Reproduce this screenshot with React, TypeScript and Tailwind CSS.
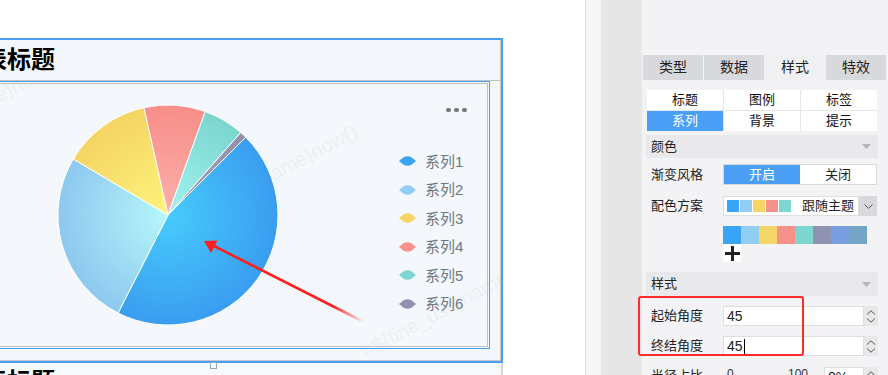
import React from 'react';

const FONT = "font-['Liberation_Sans','Noto_Sans_CJK_SC',sans-serif]";

const SLICES = [
  { name: '系列1', value: 45, inner: '#47cbfc', outer: '#3a9df0', legend: '#3aa4f6' },
  { name: '系列2', value: 26, inner: '#b6f7fa', outer: '#8dc8ef', legend: '#92cdf3' },
  { name: '系列3', value: 13, inner: '#fdf47d', outer: '#f5d462', legend: '#f5d565' },
  { name: '系列4', value: 9, inner: '#fdb0ab', outer: '#f78e8a', legend: '#f7918c' },
  { name: '系列5', value: 6, inner: '#a2f4f0', outer: '#7bd5ce', legend: '#7dd6d0' },
  { name: '系列6', value: 1, inner: '#a8a8c4', outer: '#9090ac', legend: '#9093b0' },
];

const PALETTE = ['#3aa4f6', '#92cdf3', '#f5d565', '#f7918c', '#7dd6d0', '#8f93b0', '#7a9de0', '#74a5c4'];

const CX = 168;
const CY = 131;
const R = 110;

function slicePath(a0: number, a1: number) {
  const rad = (a: number) => (a * Math.PI) / 180;
  const x0 = CX + R * Math.cos(rad(a0));
  const y0 = CY - R * Math.sin(rad(a0));
  const x1 = CX + R * Math.cos(rad(a1));
  const y1 = CY - R * Math.sin(rad(a1));
  const large = a0 - a1 > 180 ? 1 : 0;
  return `M${CX} ${CY} L${x0} ${y0} A${R} ${R} 0 ${large} 1 ${x1} ${y1} Z`;
}

function PieChart() {
  const total = SLICES.reduce((s, d) => s + d.value, 0);
  let angle = 45;
  const paths = SLICES.map((d, i) => {
    const a0 = angle;
    const a1 = angle - (d.value / total) * 360;
    angle = a1;
    return <path key={i} d={slicePath(a0, a1)} fill={`url(#pie-g${i})`} stroke="#ffffff" strokeWidth={1} />;
  });

  return (
    <svg width="390" height="262" className="shrink-0">
      <defs>
        {SLICES.map((d, i) => (
          <radialGradient key={i} id={`pie-g${i}`} cx={CX} cy={CY} r={R} gradientUnits="userSpaceOnUse">
            <stop offset="0" stopColor={d.inner} />
            <stop offset="1" stopColor={d.outer} />
          </radialGradient>
        ))}
        <linearGradient id="arrow-line" x1="212" y1="161" x2="364" y2="238" gradientUnits="userSpaceOnUse">
          <stop offset="0" stopColor="#ff1f1f" />
          <stop offset="0.8" stopColor="#ff1f1f" />
          <stop offset="1" stopColor="#ff1f1f" stopOpacity="0" />
        </linearGradient>
      </defs>
      {paths}
      <line x1="212" y1="161" x2="364" y2="238" stroke="url(#arrow-line)" strokeWidth="2.6" />
      <polygon points="204,157 217.5,156.5 211,169" fill="#ff1f1f" />
    </svg>
  );
}

function LegendIcon({ color }: { color: string }) {
  return (
    <svg width="17" height="10" viewBox="0 0 17 10" className="shrink-0">
      <path d="M0 5 L4.5 1.2 Q8.5 -0.6 12.5 1.2 L17 5 L12.5 8.8 Q8.5 10.6 4.5 8.8 Z" fill={color} />
    </svg>
  );
}

function Legend() {
  return (
    <div className="flex w-[96px] flex-col">
      <div className="mt-[24px] flex h-[4px] justify-end gap-[3px] pr-[19px]">
        <span className="h-[4px] w-[5px] rounded-full bg-[#777]" />
        <span className="h-[4px] w-[5px] rounded-full bg-[#777]" />
        <span className="h-[4px] w-[5px] rounded-full bg-[#777]" />
      </div>
      <div className="mt-[35px] flex flex-col pl-[9px]">
        {SLICES.map((d) => (
          <div key={d.name} className="flex h-[28.5px] items-center gap-[9px]">
            <LegendIcon color={d.legend} />
            <span className="text-[15px] leading-none text-[#6f7780]">{d.name}</span>
          </div>
        ))}
      </div>
    </div>
  );
}

function Watermarks() {
  return (
    <>
      <span className="pointer-events-none absolute left-[-150px] top-[20px] -rotate-[28deg] whitespace-nowrap text-[20px] text-[#ebeff3]">
        =${'{'}fine_username{'}'}now()
      </span>
      <span className="pointer-events-none absolute left-[150px] top-[85px] -rotate-[28deg] whitespace-nowrap text-[20px] text-[#ebeff3]">
        =${'{'}fine_username{'}'}now()
      </span>
      <span className="pointer-events-none absolute left-[350px] top-[205px] -rotate-[28deg] whitespace-nowrap text-[20px] text-[#ebeff3]">
        =${'{'}fine_username{'}'}now()
      </span>
    </>
  );
}

function Canvas() {
  return (
    <div className="relative w-[585px] shrink-0 overflow-hidden bg-white pt-[38px]">
      <div className="w-[503px] overflow-hidden border-b-2 border-r-2 border-t-2 border-[#4a9ff5]">
        <div className="border-b border-r border-[#c9c9c9]">
          <div className="flex h-[41px] items-center overflow-hidden border-b border-[#c2c2c2] bg-[#f3f7fb]">
            <span className="ml-[-41px] whitespace-nowrap text-[24px] font-bold leading-none text-black">图表标题</span>
          </div>
          <div className="relative h-[279px] overflow-hidden bg-[#f4f8fc]">
            <Watermarks />
            <div className="relative h-[268px] w-[490px] border-b border-r border-t border-[#4a9ff5] pb-[1px] pr-[1px] pt-[1px]">
              <div className="flex h-full border-b border-r border-t border-[#c0c0c0]">
                <PieChart />
                <Legend />
              </div>
            </div>
          </div>
        </div>
      </div>
      <div className="h-[20px] w-[503px] overflow-hidden border-r-2 border-[#d6d6d6] bg-[#f7fafd] pt-[7px]">
        <span className="ml-[-41px] whitespace-nowrap text-[24px] font-bold leading-none text-black">图表标题</span>
      </div>
      <div className="absolute left-[210px] top-[362px] h-[7px] w-[7px] border border-[#8ea8c6] bg-white" />
    </div>
  );
}

function Spinner() {
  return (
    <div className="flex h-full w-[14px] shrink-0 flex-col items-center justify-center gap-[3px] bg-[#e8e8eb]">
      <svg width="10" height="5" viewBox="0 0 10 5">
        <polyline points="1,4.5 5,0.8 9,4.5" fill="none" stroke="#555" strokeWidth="1" />
      </svg>
      <svg width="10" height="5" viewBox="0 0 10 5">
        <polyline points="1,0.5 5,4.2 9,0.5" fill="none" stroke="#555" strokeWidth="1" />
      </svg>
    </div>
  );
}

function SectionHeader({ title }: { title: string }) {
  return (
    <div className="ml-[4px] flex w-[232px] items-center justify-between bg-[#e9e9eb] pl-[5px] pr-[7px] text-[13px]">
      <span>{title}</span>
      <svg width="9" height="5" viewBox="0 0 9 5">
        <polygon points="0,0 9,0 4.5,5" fill="#b4b4b8" />
      </svg>
    </div>
  );
}

function Row({ label, className, children }: { label: string; className: string; children: React.ReactNode }) {
  return (
    <div className={`flex items-center ${className}`}>
      <span className="w-[81px] shrink-0 pl-[9px] text-[13px]">{label}</span>
      {children}
    </div>
  );
}

function NumberInput({ value, cursor }: { value: string; cursor?: boolean }) {
  return (
    <div className="flex h-full">
      <div className="flex w-[141px] items-center border border-[#dedede] bg-white pl-[3px] text-[14px]">
        {value}
        {cursor && <span className="ml-[1px] h-[15px] w-[1px] bg-black" />}
      </div>
      <Spinner />
    </div>
  );
}

function Panel() {
  const tabs = ['类型', '数据', '样式', '特效'];
  const subTabs = ['标题', '图例', '标签', '系列', '背景', '提示'];
  return (
    <div className="flex w-[246px] shrink-0 flex-col bg-[#f3f3f6] text-[#222]">
      <div className="h-[55px] shrink-0" />
      <div className="flex h-[25px] shrink-0 gap-[1px] pl-[1px]">
        {tabs.map((t, i) => (
          <div
            key={t}
            className={`flex w-[60px] items-center justify-center text-[14px] ${i === 2 ? 'bg-[#f0f0f3]' : 'bg-[#d8d9dd]'}`}
          >
            {t}
          </div>
        ))}
      </div>
      <div className="ml-[5px] mt-[10px] grid w-[230px] shrink-0 grid-cols-3 gap-[1px] bg-[#e6e6e8]">
        {subTabs.map((t, i) => (
          <div
            key={t}
            className={`flex h-[20px] items-center justify-center text-[13px] ${i === 3 ? 'bg-[#4a9ff5] text-white' : 'bg-white text-[#111]'}`}
          >
            {t}
          </div>
        ))}
      </div>
      <div className="mt-[4px] flex h-[23px] shrink-0">
        <SectionHeader title="颜色" />
      </div>
      <Row label="渐变风格" className="mt-[6px] h-[21px] shrink-0">
        <div className="flex h-full w-[154px] border border-[#d8d8d8] text-[13px]">
          <div className="flex flex-1 items-center justify-center bg-[#4a9ff5] text-white">开启</div>
          <div className="flex flex-1 items-center justify-center bg-white">关闭</div>
        </div>
      </Row>
      <Row label="配色方案" className="mt-[11px] h-[20px] shrink-0">
        <div className="flex h-full">
          <div className="flex w-[136px] items-center gap-[1px] border border-[#dedede] bg-white pl-[3px]">
            {PALETTE.slice(0, 5).map((c) => (
              <span key={c} className="h-[12px] w-[12px]" style={{ backgroundColor: c }} />
            ))}
            <span className="ml-[10px] text-[13px]">跟随主题</span>
          </div>
          <div className="flex w-[18px] items-center justify-center bg-[#d8d9dd]">
            <svg width="9" height="5" viewBox="0 0 9 5">
              <polyline points="0.5,0.5 4.5,4.3 8.5,0.5" fill="none" stroke="#555" strokeWidth="1" />
            </svg>
          </div>
        </div>
      </Row>
      <div className="ml-[81px] mt-[10px] flex h-[18px] shrink-0">
        {PALETTE.map((c) => (
          <span key={c} className="h-[18px] w-[18px]" style={{ backgroundColor: c }} />
        ))}
      </div>
      <div className="ml-[81px] flex h-[18px] w-[18px] shrink-0 items-center justify-center bg-white">
        <svg width="15" height="15" viewBox="0 0 15 15">
          <rect x="6" y="0" width="3" height="15" fill="#222" />
          <rect x="0" y="6" width="15" height="3" fill="#222" />
        </svg>
      </div>
      <div className="mt-[10px] flex h-[24px] shrink-0">
        <SectionHeader title="样式" />
      </div>
      <Row label="起始角度" className="mt-[10px] h-[20px] shrink-0">
        <NumberInput value="45" />
      </Row>
      <Row label="终结角度" className="mt-[10px] h-[20px] shrink-0">
        <NumberInput value="45" cursor />
      </Row>
      <div className="mt-[11px] flex h-[20px] shrink-0">
        <span className="w-[81px] shrink-0 pl-[9px] pt-[2px] text-[13px] leading-none">半径占比</span>
        <div className="flex w-[101px] justify-between pl-[4px] pr-[16px] text-[12px] leading-none text-[#333]">
          <span className="mt-[1px]">0</span>
          <span className="mt-[1px]">100</span>
        </div>
        <div className="flex h-full">
          <div className="flex w-[40px] items-center border border-[#dedede] bg-white pl-[3px] text-[14px]">0%</div>
          <Spinner />
        </div>
      </div>
    </div>
  );
}

export default function App() {
  return (
    <div className={`relative flex h-[375px] w-[888px] overflow-hidden bg-white ${FONT}`}>
      <Canvas />
      <div className="w-[16px] shrink-0 border-l border-[#e0e0da] bg-[#f7f7f5]" />
      <div className="w-[41px] shrink-0 bg-[#e6e6e6]" />
      <Panel />
      <div className="pointer-events-none absolute left-[638px] top-[296px] h-[60px] w-[166px] rounded-[3px] border-2 border-[#ff2a2a]" />
    </div>
  );
}
